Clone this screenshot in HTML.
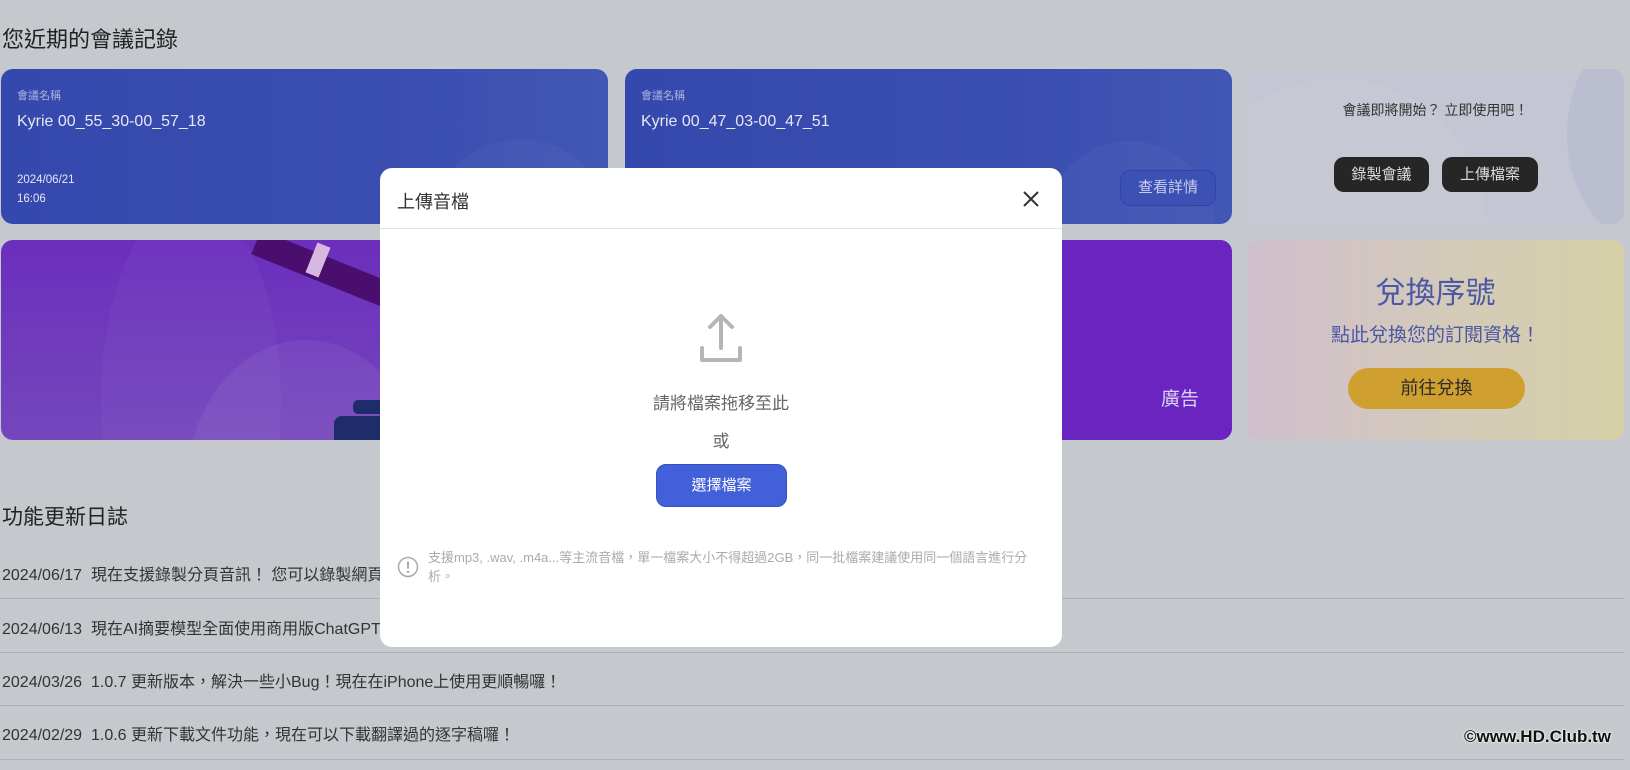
<!DOCTYPE html>
<html><head><meta charset="utf-8">
<style>
*{margin:0;padding:0;box-sizing:border-box}
body{width:1630px;height:770px;overflow:hidden;background:#c5c8cc;font-family:"Liberation Sans","Noto Sans CJK TC",sans-serif;position:relative;color:#222}
.a{position:absolute}
.card{position:absolute;border-radius:12px;overflow:hidden}
.blue{background:linear-gradient(90deg,#3548ad,#3a4db0 60%,#4256b4);color:#e6e8f4}
.lbl{font-size:11px;color:#aab3dd}
.log{position:absolute;left:2px;font-size:16px;color:#333}
.ln{position:absolute;left:0;width:1624px;height:1px;background:#aeb1b5}
.dbtn{position:absolute;background:#262626;color:#ddd;border-radius:10px;font-size:15px;text-align:center;line-height:35px}
</style></head><body>
<div class="a" style="left:2px;top:22px;font-size:22px;color:#222">您近期的會議記錄</div>

<div class="card blue" style="left:1px;top:69px;width:607px;height:155px">
 <div class="a" style="left:430px;top:70px;width:180px;height:180px;border-radius:50%;background:rgba(255,255,255,.03)"></div>
 <div class="a lbl" style="left:16px;top:18px">會議名稱</div>
 <div class="a" style="left:16px;top:44px;font-size:16px">Kyrie 00_55_30-00_57_18</div>
 <div class="a" style="left:16px;top:102px;font-size:11.5px;line-height:19px">2024/06/21<br>16:06</div>
</div>
<div class="card blue" style="left:625px;top:69px;width:607px;height:155px">
 <div class="a" style="left:420px;top:72px;width:170px;height:170px;border-radius:50%;background:rgba(255,255,255,.03)"></div>
 <div class="a lbl" style="left:16px;top:18px">會議名稱</div>
 <div class="a" style="left:16px;top:44px;font-size:16px">Kyrie 00_47_03-00_47_51</div>
 <div class="a" style="left:495px;top:101px;width:96px;height:36px;border:1px solid #3345a8;border-radius:10px;background:#3d50b3;color:#c8cdea;font-size:15px;text-align:center;line-height:34px">查看詳情</div>
</div>
<div class="card" style="left:1247px;top:69px;width:377px;height:155px;background:#c4c6d3">
 <div class="a" style="left:-60px;top:10px;width:300px;height:300px;border-radius:50%;background:rgba(255,255,255,.04)"></div>
 <div class="a" style="left:320px;top:-50px;width:180px;height:230px;border-radius:50%;background:#bbbed1"></div>
 <div class="a" style="left:0;top:31px;width:377px;text-align:center;font-size:14px;color:#333">會議即將開始？ 立即使用吧！</div>
 <div class="dbtn" style="left:87px;top:88px;width:95px">錄製會議</div>
 <div class="dbtn" style="left:195px;top:88px;width:96px">上傳檔案</div>
</div>

<div class="card" style="left:1px;top:240px;width:1231px;height:200px;background:linear-gradient(180deg,#6b2ebd,#7447bc);">
 <div class="a" style="left:100px;top:-40px;width:180px;height:400px;border-radius:50%;background:rgba(255,255,255,.03)"></div>
 <div class="a" style="left:185px;top:100px;width:240px;height:300px;border-radius:50%;background:rgba(255,255,255,.06)"></div>
 <div class="a" style="left:260px;top:-10px;width:150px;height:26px;background:#4a0f6e;transform:rotate(22deg);transform-origin:left top"></div>
 <div class="a" style="left:310px;top:4px;width:14px;height:32px;background:#d8b8e0;transform:rotate(22deg)"></div>
 <div class="a" style="left:352px;top:160px;width:40px;height:14px;border-radius:5px;background:#1e2c6a"></div>
 <div class="a" style="left:333px;top:176px;width:60px;height:30px;border-radius:8px;background:#1e2c6a"></div>
 <div class="a" style="left:1060px;top:0;width:171px;height:200px;background:#6a24c0"></div>
 <div class="a" style="left:1160px;top:144px;font-size:19px;color:#ddd0f0">廣告</div>
</div>
<div class="card" style="left:1247px;top:240px;width:377px;height:200px;background:linear-gradient(90deg,#cfbfcd,#d4cbb6 60%,#d6d0a8)">
 <div class="a" style="left:0;top:28px;width:377px;text-align:center;font-size:30px;color:#4b58a5">兌換序號</div>
 <div class="a" style="left:0;top:80px;width:377px;text-align:center;font-size:19px;color:#4b58a5">點此兌換您的訂閱資格！</div>
 <div class="a" style="left:101px;top:128px;width:177px;height:41px;border-radius:21px;background:#cfa030;text-align:center;line-height:41px;font-size:18px;color:#2a2a2a">前往兌換</div>
</div>

<div class="a" style="left:2px;top:501px;font-size:21px;color:#222">功能更新日誌</div>
<div class="log" style="top:561px">2024/06/17&nbsp; 現在支援錄製分頁音訊！ 您可以錄製網頁會議的聲音</div>
<div class="ln" style="top:598px"></div>
<div class="log" style="top:615px">2024/06/13&nbsp; 現在AI摘要模型全面使用商用版ChatGPT</div>
<div class="ln" style="top:652px"></div>
<div class="log" style="top:668px">2024/03/26&nbsp; 1.0.7 更新版本，解決一些小Bug！現在在iPhone上使用更順暢囉！</div>
<div class="ln" style="top:705px"></div>
<div class="log" style="top:721px">2024/02/29&nbsp; 1.0.6 更新下載文件功能，現在可以下載翻譯過的逐字稿囉！</div>
<div class="ln" style="top:759px"></div>
<div class="a" style="left:1464px;top:727px;font-size:17px;font-weight:bold;color:#111;text-shadow:0 0 2px #fff,0 0 2px #fff">©www.HD.Club.tw</div>

<div class="a" style="left:380px;top:168px;width:682px;height:479px;background:#fff;border-radius:12px">
 <div class="a" style="left:17px;top:20px;font-size:18px;color:#333">上傳音檔</div>
 <svg class="a" style="left:642px;top:22px" width="18" height="18" viewBox="0 0 18 18"><path d="M2 2L16 16M16 2L2 16" stroke="#333" stroke-width="2"/></svg>
 <div class="a" style="left:0;top:60px;width:682px;height:1px;background:#e2e2e2"></div>
 <svg class="a" style="left:318px;top:144px" width="46" height="52" viewBox="0 0 46 52"><path d="M23 4V36M12 15L23 4L34 15" stroke="#b5b5b5" stroke-width="4" fill="none" stroke-linecap="round" stroke-linejoin="round"/><path d="M4 36V48H42V36" stroke="#b5b5b5" stroke-width="4" fill="none" stroke-linecap="round" stroke-linejoin="round"/></svg>
 <div class="a" style="left:0;top:221px;width:682px;text-align:center;font-size:17px;color:#666">請將檔案拖移至此</div>
 <div class="a" style="left:0;top:259px;width:682px;text-align:center;font-size:17px;color:#666">或</div>
 <div class="a" style="left:276px;top:296px;width:131px;height:43px;border-radius:10px;background:#4260d8;border:1px solid #3550c0;color:#fff;text-align:center;line-height:41px;font-size:15px">選擇檔案</div>
 <svg class="a" style="left:17px;top:388px" width="22" height="22" viewBox="0 0 22 22"><circle cx="11" cy="11" r="9.5" stroke="#aaa" stroke-width="1.5" fill="none"/><path d="M11 5.5V12.5" stroke="#aaa" stroke-width="2"/><circle cx="11" cy="16" r="1.2" fill="#aaa"/></svg>
 <div class="a" style="left:48px;top:380px;width:614px;font-size:13px;line-height:19px;color:#aaa">支援mp3, .wav, .m4a...等主流音檔，單一檔案大小不得超過2GB，同一批檔案建議使用同一個語言進行分析。</div>
</div>
</body></html>
